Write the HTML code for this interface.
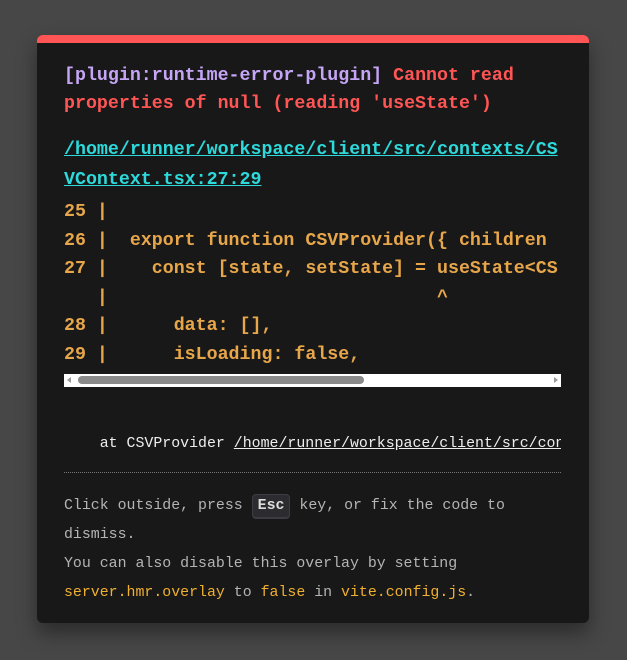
<!DOCTYPE html>
<html><head><meta charset="utf-8"><style>
html,body{margin:0;padding:0;width:627px;height:660px;background:#474747;overflow:hidden}
.panel{position:absolute;left:37px;top:35px;width:552px;height:588px;background:#181818;border-radius:6px;border-top:8px solid #ff5555;box-sizing:border-box;box-shadow:0 10px 20px rgba(0,0,0,.4);overflow:hidden}
.t{position:absolute;left:27px;white-space:pre;font-family:"Liberation Mono",monospace;font-weight:bold;font-size:18.3px;line-height:28px}
.s{position:absolute;white-space:pre;font-family:"Liberation Mono",monospace;font-size:14.9px;line-height:29px;color:#b4b4b4}
.p{color:#c5a5f5}.r{color:#ff5555}.c{color:#2dd9da;text-decoration:underline}.o{color:#e8a64a}.y{color:#f0b030}
.kbd{display:inline-block;background:#2c2c30;border:1px solid #3c3c42;border-bottom-width:2px;border-radius:4px;color:#ddd;font-weight:bold;padding:0 5px;line-height:22px}
</style></head><body>
<div class="panel">
<div class="t" style="top:19px"><span class="p">[plugin:runtime-error-plugin]</span> <span class="r">Cannot read</span></div>
<div class="t r" style="top:47px">properties of null (reading 'useState')</div>
<div class="t c" style="top:93px">/home/runner/workspace/client/src/contexts/CS</div>
<div class="t c" style="top:123px">VContext.tsx:27:29</div>
<div class="t o" style="top:155px">25 |</div>
<div class="t o" style="top:184px">26 |  export function CSVProvider({ children</div>
<div class="t o" style="top:212px">27 |    const [state, setState] = useState&lt;CS</div>
<div class="t o" style="top:241px">   |                              ^</div>
<div class="t o" style="top:269px">28 |      data: [],</div>
<div class="t o" style="top:298px">29 |      isLoading: false,</div>
<div style="position:absolute;left:27px;top:331px;width:497px;height:13px;background:#fff">
 <div style="position:absolute;left:3px;top:3px;width:0;height:0;border-top:3.5px solid transparent;border-bottom:3.5px solid transparent;border-right:4px solid #999"></div>
 <div style="position:absolute;left:14px;top:2px;width:286px;height:8px;background:#8a8a8a;border-radius:4px"></div>
 <div style="position:absolute;right:3px;top:3px;width:0;height:0;border-top:3.5px solid transparent;border-bottom:3.5px solid transparent;border-left:4px solid #999"></div>
</div>
<div class="s" style="left:27px;top:387px;color:#eee;width:497px;overflow:hidden">    at CSVProvider <span style="text-decoration:underline">/home/runner/workspace/client/src/contexts/CSVContext.tsx</span></div>
<div style="position:absolute;left:27px;top:429px;width:497px;border-top:1px dotted #777"></div>
<div class="s" style="left:27px;top:449px">Click outside, press <span class="kbd">Esc</span> key, or fix the code to</div>
<div class="s" style="left:27px;top:478px">dismiss.</div>
<div class="s" style="left:27px;top:507px">You can also disable this overlay by setting</div>
<div class="s" style="left:27px;top:536px"><span class="y">server.hmr.overlay</span> to <span class="y">false</span> in <span class="y">vite.config.js</span>.</div>
</div>
</body></html>
